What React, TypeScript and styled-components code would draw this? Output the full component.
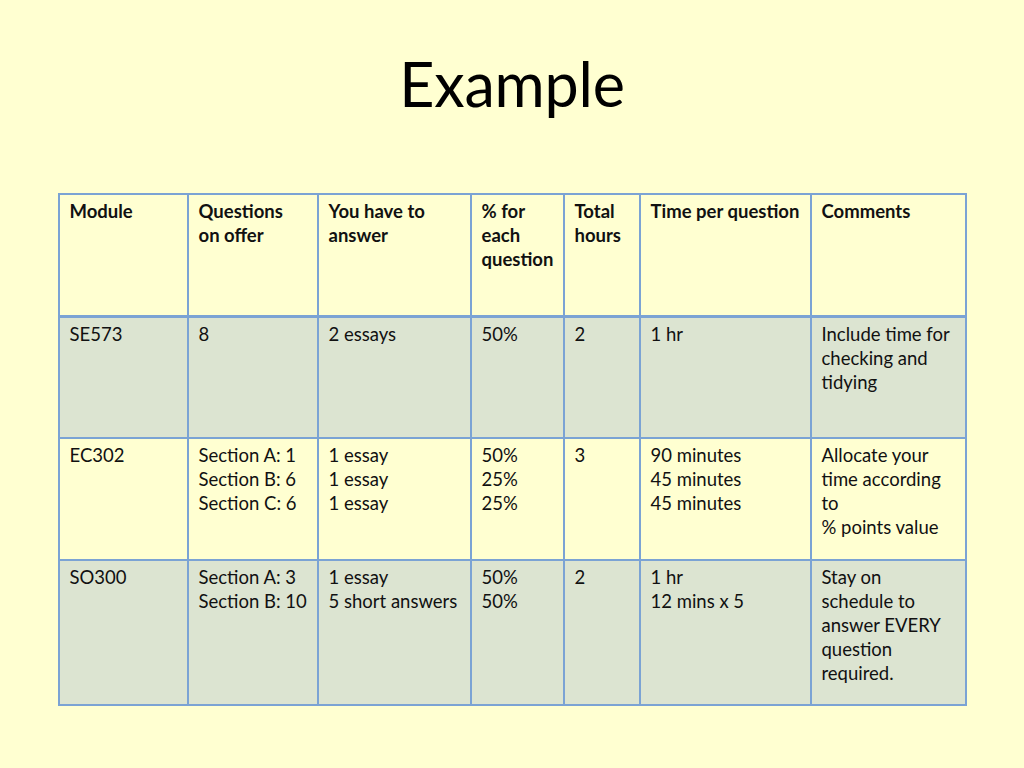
import React from 'react';
import styled, { createGlobalStyle } from 'styled-components';

type Row = {
  module: string;
  questions: string[];
  answer: string[];
  percent: string[];
  hours: string;
  time: string[];
  comments: string[];
};

const rows: Row[] = [
  {
    module: 'SE573',
    questions: ['8'],
    answer: ['2 essays'],
    percent: ['50%'],
    hours: '2',
    time: ['1 hr'],
    comments: ['Include time for', 'checking and', 'tidying'],
  },
  {
    module: 'EC302',
    questions: ['Section A: 1', 'Section B: 6', 'Section C: 6'],
    answer: ['1 essay', '1 essay', '1 essay'],
    percent: ['50%', '25%', '25%'],
    hours: '3',
    time: ['90 minutes', '45 minutes', '45 minutes'],
    comments: ['Allocate your', 'time according', 'to', '% points value'],
  },
  {
    module: 'SO300',
    questions: ['Section A: 3', 'Section B: 10'],
    answer: ['1 essay', '5 short answers'],
    percent: ['50%', '50%'],
    hours: '2',
    time: ['1 hr', '12 mins x 5'],
    comments: ['Stay on', 'schedule to', 'answer EVERY', 'question', 'required.'],
  },
];

const headers = [
  ['Module'],
  ['Questions', 'on offer'],
  ['You have to', 'answer'],
  ['% for', 'each', 'question'],
  ['Total', 'hours'],
  ['Time per question'],
  ['Comments'],
];

const colWidths = [129, 130, 153, 93, 76, 171, 155];
const rowHeights = [122, 122, 145];

const GlobalStyle = createGlobalStyle`
  html, body {
    margin: 0;
    padding: 0;
    background: #ffffd1;
  }
  body {
    font-family: Lato, 'Open Sans', sans-serif;
    color: #111;
  }
`;

const Slide = styled.main`
  width: 1024px;
  height: 768px;
  display: flex;
  flex-direction: column;
  align-items: center;
  background: #ffffd1;
`;

const Title = styled.h1`
  margin: 0;
  height: 193px;
  padding-top: 49px;
  box-sizing: border-box;
  font-family: Lato, sans-serif;
  font-weight: 400;
  font-size: 61px;
  line-height: 70px;
  letter-spacing: -0.2px;
  color: #000;
`;

const Table = styled.table`
  border-collapse: collapse;
  table-layout: fixed;
  width: 907px;
`;

const HeadRow = styled.tr`
  height: 122px;
  background: #ffffd1;
  border-bottom: 3px solid #7ba3d4;
`;

const BodyRow = styled.tr<{ $shaded: boolean }>`
  background: ${({ $shaded }) => ($shaded ? '#dce4d1' : '#ffffd1')};
`;

const Cell = styled.td<{ $bold?: boolean }>`
  border: 2px solid #7ba3d4;
  vertical-align: top;
  padding: 4px 5px 0 10px;
  font-size: 18.5px;
  line-height: 24px;
  font-weight: ${({ $bold }) => ($bold ? 700 : 400)};
  text-align: left;
  white-space: nowrap;
  overflow: hidden;
`;

const Lines = ({ lines }: { lines: string[] }) => (
  <>
    {lines.map((line, i) => (
      <div key={i}>{line}</div>
    ))}
  </>
);

const App = () => {
  return (
    <Slide>
      <GlobalStyle />
      <Title>Example</Title>
      <Table>
        <colgroup>
          {colWidths.map((w, i) => (
            <col key={i} style={{ width: w }} />
          ))}
        </colgroup>
        <thead>
          <HeadRow>
            {headers.map((h, i) => (
              <Cell as='th' key={i} $bold>
                <Lines lines={h} />
              </Cell>
            ))}
          </HeadRow>
        </thead>
        <tbody>
          {rows.map((row, i) => (
            <BodyRow key={row.module} $shaded={i !== 1} style={{ height: rowHeights[i] }}>
              <Cell>{row.module}</Cell>
              <Cell>
                <Lines lines={row.questions} />
              </Cell>
              <Cell>
                <Lines lines={row.answer} />
              </Cell>
              <Cell>
                <Lines lines={row.percent} />
              </Cell>
              <Cell>{row.hours}</Cell>
              <Cell>
                <Lines lines={row.time} />
              </Cell>
              <Cell>
                <Lines lines={row.comments} />
              </Cell>
            </BodyRow>
          ))}
        </tbody>
      </Table>
    </Slide>
  );
};

export default App;
